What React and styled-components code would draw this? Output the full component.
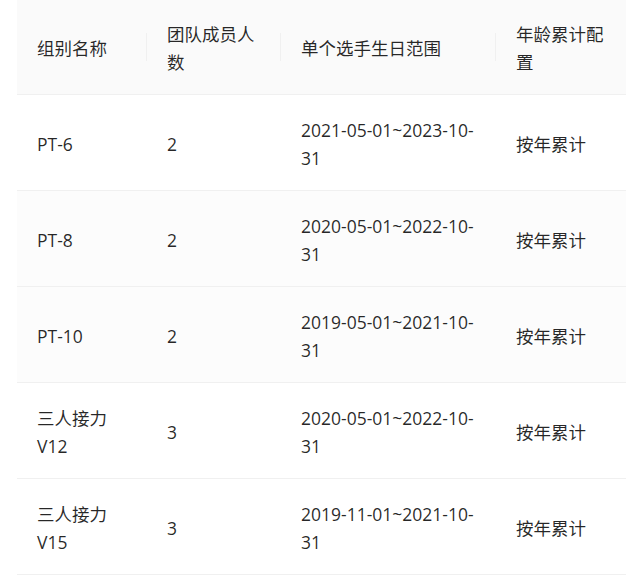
import React from 'react';
import styled, { createGlobalStyle } from 'styled-components';

const GlobalStyle = createGlobalStyle`
  html, body {
    margin: 0;
    padding: 0;
    background: #fff;
    overflow: hidden;
  }
  body {
    font-family: "Open Sans", "Noto Sans CJK SC", sans-serif;
    color: rgba(0, 0, 0, 0.85);
  }
`;

const columns = [
  { key: 'group', title: '组别名称', width: 130 },
  { key: 'members', title: '团队成员人数', width: 134 },
  { key: 'birth', title: '单个选手生日范围', width: 215 },
  { key: 'age', title: '年龄累计配置', width: 138 },
];

const rows = [
  { group: 'PT-6', members: 2, birth: '2021-05-01~2023-10-31', age: '按年累计' },
  { group: 'PT-8', members: 2, birth: '2020-05-01~2022-10-31', age: '按年累计', shaded: true },
  { group: 'PT-10', members: 2, birth: '2019-05-01~2021-10-31', age: '按年累计', shaded: true },
  { group: '三人接力V12', members: 3, birth: '2020-05-01~2022-10-31', age: '按年累计' },
  { group: '三人接力V15', members: 3, birth: '2019-11-01~2021-10-31', age: '按年累计' },
];

const Page = styled.div`
  padding-left: 17px;
`;

const Table = styled.table`
  width: 617px;
  table-layout: fixed;
  border-collapse: collapse;
  border-spacing: 0;
  font-size: 17.5px;
  line-height: 27.5px;
`;

const HeadCell = styled.th`
  position: relative;
  padding: 21px 20px 18px;
  background: #fafafa;
  border-bottom: 1px solid #f0f0f0;
  text-align: left;
  font-weight: 400;
  word-break: break-all;

  &:not(:last-child)::before {
    content: '';
    position: absolute;
    right: 0;
    top: 50%;
    width: 1px;
    height: 28px;
    transform: translateY(-50%);
    background: #f0f0f0;
  }
`;

const Row = styled.tr`
  background: ${(p) => (p.$shaded ? '#fcfcfc' : '#fff')};
`;

const Cell = styled.td`
  padding: 22px 20px 18px;
  border-bottom: 1px solid #f0f0f0;
  vertical-align: middle;
`;

export default function App() {
  return (
    <Page>
      <GlobalStyle />
      <Table>
        <colgroup>
          {columns.map((c) => (
            <col key={c.key} style={{ width: c.width }} />
          ))}
        </colgroup>
        <thead>
          <tr>
            {columns.map((c) => (
              <HeadCell key={c.key}>{c.title}</HeadCell>
            ))}
          </tr>
        </thead>
        <tbody>
          {rows.map((r) => (
            <Row key={r.group} $shaded={r.shaded}>
              <Cell>{r.group}</Cell>
              <Cell>{r.members}</Cell>
              <Cell>{r.birth}</Cell>
              <Cell>{r.age}</Cell>
            </Row>
          ))}
        </tbody>
      </Table>
    </Page>
  );
}
